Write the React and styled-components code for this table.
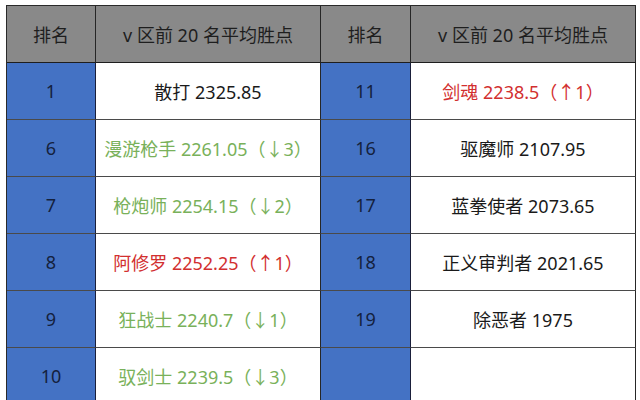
import React from "react";
import styled, { createGlobalStyle } from "styled-components";

const Global = createGlobalStyle`
  html, body { margin: 0; padding: 0; background: #ffffff; }
  body { font-family: "Noto Sans", "Noto Sans CJK SC", sans-serif; }
`;

const Page = styled.div`
  width: 640px;
  height: 400px;
  overflow: hidden;
  padding: 5px 0 0 6px;
  box-sizing: border-box;
  background: #fff;
`;

const Grid = styled.div`
  display: grid;
  grid-template-columns: 89px 225px 90px 225px;
  grid-auto-rows: 57px;
  border-top: 1px solid #2a2a2a;
  border-left: 1px solid #2a2a2a;
  width: max-content;
`;

const Cell = styled.div`
  display: flex;
  align-items: center;
  justify-content: center;
  box-sizing: border-box;
  border-right: 1px solid #262626;
  border-bottom: 1px solid ${(p) => (p.$head ? "#1e1e1e" : "#4a4a4a")};
  font-size: 18px;
  white-space: nowrap;
`;

const HeadCell = styled(Cell)`
  background: #898989;
  color: #1e1e1e;
`;

const RankCell = styled(Cell)`
  background: #4472c4;
  color: #14213d;
  border-right-color: #1a1f3a;
`;

const tones = {
  black: "#1a1a1a",
  green: "#79b15a",
  red: "#d22f2f",
};

const ValueCell = styled(Cell)`
  background: #ffffff;
  color: ${(p) => tones[p.$tone] || tones.black};
`;

const left = [
  ["1", "散打 2325.85", "black"],
  ["6", "漫游枪手 2261.05（↓3）", "green"],
  ["7", "枪炮师 2254.15（↓2）", "green"],
  ["8", "阿修罗 2252.25（↑1）", "red"],
  ["9", "狂战士 2240.7（↓1）", "green"],
  ["10", "驭剑士 2239.5（↓3）", "green"],
];

const right = [
  ["11", "剑魂 2238.5（↑1）", "red"],
  ["16", "驱魔师 2107.95", "black"],
  ["17", "蓝拳使者 2073.65", "black"],
  ["18", "正义审判者 2021.65", "black"],
  ["19", "除恶者 1975", "black"],
  ["", "", "black"],
];

export default function App() {
  return (
    <Page>
      <Global />
      <Grid>
        <HeadCell $head>排名</HeadCell>
        <HeadCell $head>v 区前 20 名平均胜点</HeadCell>
        <HeadCell $head>排名</HeadCell>
        <HeadCell $head>v 区前 20 名平均胜点</HeadCell>
        {left.map((l, i) => {
          const r = right[i];
          return (
            <React.Fragment key={i}>
              <RankCell>{l[0]}</RankCell>
              <ValueCell $tone={l[2]}>{l[1]}</ValueCell>
              <RankCell>{r[0]}</RankCell>
              <ValueCell $tone={r[2]}>{r[1]}</ValueCell>
            </React.Fragment>
          );
        })}
      </Grid>
    </Page>
  );
}
